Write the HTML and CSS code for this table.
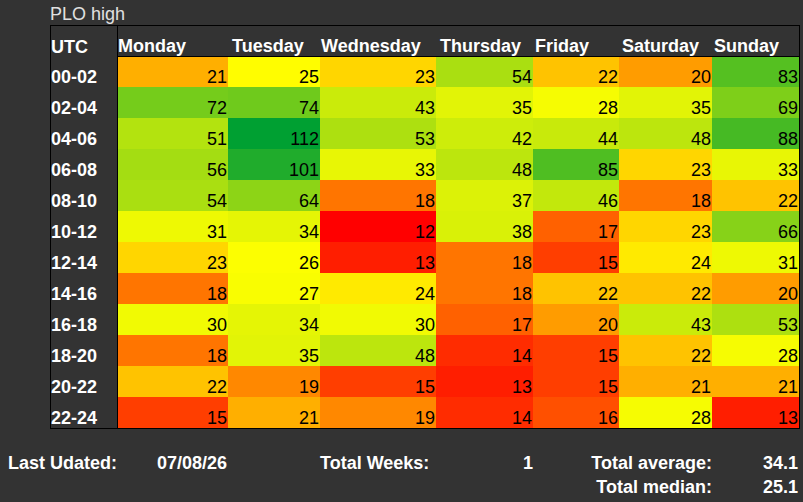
FILE: index.html
```html
<!DOCTYPE html>
<html lang="en">
<head>
<meta charset="utf-8">
<title>PLO high</title>
<link rel="stylesheet" href="styles.css">
</head>
<body>
<div class="page">
  <div class="title">PLO high</div>
  <div class="heatmap">
    <div class="utc corner">UTC</div>
    <div class="day d1">Monday</div>
    <div class="day d2">Tuesday</div>
    <div class="day d3">Wednesday</div>
    <div class="day d4">Thursday</div>
    <div class="day d5">Friday</div>
    <div class="day d6">Saturday</div>
    <div class="day d7">Sunday</div>

    <div class="utc">00-02</div>
    <div class="cell" style="background:rgb(255,175,0)">21</div>
    <div class="cell" style="background:rgb(255,253,0)">25</div>
    <div class="cell" style="background:rgb(255,214,0)">23</div>
    <div class="cell" style="background:rgb(170,223,17)">54</div>
    <div class="cell" style="background:rgb(255,195,0)">22</div>
    <div class="cell" style="background:rgb(255,156,0)">20</div>
    <div class="cell" style="background:rgb(85,192,33)">83</div>

    <div class="utc">02-04</div>
    <div class="cell" style="background:rgb(117,204,27)">72</div>
    <div class="cell" style="background:rgb(111,202,28)">74</div>
    <div class="cell" style="background:rgb(202,235,10)">43</div>
    <div class="cell" style="background:rgb(226,244,6)">35</div>
    <div class="cell" style="background:rgb(246,252,2)">28</div>
    <div class="cell" style="background:rgb(226,244,6)">35</div>
    <div class="cell" style="background:rgb(126,207,25)">69</div>

    <div class="utc">04-06</div>
    <div class="cell" style="background:rgb(179,227,15)">51</div>
    <div class="cell" style="background:rgb(0,160,50)">112</div>
    <div class="cell" style="background:rgb(173,224,16)">53</div>
    <div class="cell" style="background:rgb(205,237,10)">42</div>
    <div class="cell" style="background:rgb(200,234,11)">44</div>
    <div class="cell" style="background:rgb(188,230,13)">48</div>
    <div class="cell" style="background:rgb(70,186,36)">88</div>

    <div class="utc">06-08</div>
    <div class="cell" style="background:rgb(164,221,18)">56</div>
    <div class="cell" style="background:rgb(32,172,44)">101</div>
    <div class="cell" style="background:rgb(232,246,5)">33</div>
    <div class="cell" style="background:rgb(188,230,13)">48</div>
    <div class="cell" style="background:rgb(79,190,34)">85</div>
    <div class="cell" style="background:rgb(255,214,0)">23</div>
    <div class="cell" style="background:rgb(232,246,5)">33</div>

    <div class="utc">08-10</div>
    <div class="cell" style="background:rgb(170,223,17)">54</div>
    <div class="cell" style="background:rgb(141,212,22)">64</div>
    <div class="cell" style="background:rgb(255,117,0)">18</div>
    <div class="cell" style="background:rgb(220,242,7)">37</div>
    <div class="cell" style="background:rgb(194,232,12)">46</div>
    <div class="cell" style="background:rgb(255,117,0)">18</div>
    <div class="cell" style="background:rgb(255,195,0)">22</div>

    <div class="utc">10-12</div>
    <div class="cell" style="background:rgb(238,249,3)">31</div>
    <div class="cell" style="background:rgb(229,245,5)">34</div>
    <div class="cell" style="background:rgb(255,0,0)">12</div>
    <div class="cell" style="background:rgb(217,241,7)">38</div>
    <div class="cell" style="background:rgb(255,97,0)">17</div>
    <div class="cell" style="background:rgb(255,214,0)">23</div>
    <div class="cell" style="background:rgb(135,210,24)">66</div>

    <div class="utc">12-14</div>
    <div class="cell" style="background:rgb(255,214,0)">23</div>
    <div class="cell" style="background:rgb(252,254,1)">26</div>
    <div class="cell" style="background:rgb(255,30,0)">13</div>
    <div class="cell" style="background:rgb(255,117,0)">18</div>
    <div class="cell" style="background:rgb(255,62,0)">15</div>
    <div class="cell" style="background:rgb(255,234,0)">24</div>
    <div class="cell" style="background:rgb(238,249,3)">31</div>

    <div class="utc">14-16</div>
    <div class="cell" style="background:rgb(255,117,0)">18</div>
    <div class="cell" style="background:rgb(249,253,1)">27</div>
    <div class="cell" style="background:rgb(255,234,0)">24</div>
    <div class="cell" style="background:rgb(255,117,0)">18</div>
    <div class="cell" style="background:rgb(255,195,0)">22</div>
    <div class="cell" style="background:rgb(255,195,0)">22</div>
    <div class="cell" style="background:rgb(255,156,0)">20</div>

    <div class="utc">16-18</div>
    <div class="cell" style="background:rgb(241,250,3)">30</div>
    <div class="cell" style="background:rgb(229,245,5)">34</div>
    <div class="cell" style="background:rgb(241,250,3)">30</div>
    <div class="cell" style="background:rgb(255,97,0)">17</div>
    <div class="cell" style="background:rgb(255,156,0)">20</div>
    <div class="cell" style="background:rgb(202,235,10)">43</div>
    <div class="cell" style="background:rgb(173,224,16)">53</div>

    <div class="utc">18-20</div>
    <div class="cell" style="background:rgb(255,117,0)">18</div>
    <div class="cell" style="background:rgb(226,244,6)">35</div>
    <div class="cell" style="background:rgb(188,230,13)">48</div>
    <div class="cell" style="background:rgb(255,44,0)">14</div>
    <div class="cell" style="background:rgb(255,62,0)">15</div>
    <div class="cell" style="background:rgb(255,195,0)">22</div>
    <div class="cell" style="background:rgb(246,252,2)">28</div>

    <div class="utc">20-22</div>
    <div class="cell" style="background:rgb(255,195,0)">22</div>
    <div class="cell" style="background:rgb(255,136,0)">19</div>
    <div class="cell" style="background:rgb(255,62,0)">15</div>
    <div class="cell" style="background:rgb(255,30,0)">13</div>
    <div class="cell" style="background:rgb(255,62,0)">15</div>
    <div class="cell" style="background:rgb(255,175,0)">21</div>
    <div class="cell" style="background:rgb(255,175,0)">21</div>

    <div class="utc">22-24</div>
    <div class="cell" style="background:rgb(255,62,0)">15</div>
    <div class="cell" style="background:rgb(255,175,0)">21</div>
    <div class="cell" style="background:rgb(255,136,0)">19</div>
    <div class="cell" style="background:rgb(255,44,0)">14</div>
    <div class="cell" style="background:rgb(255,80,0)">16</div>
    <div class="cell" style="background:rgb(246,252,2)">28</div>
    <div class="cell" style="background:rgb(255,30,0)">13</div>
  </div>

  <div class="summary">
    <div class="label">Last Udated:</div>
    <div class="value">07/08/26</div>
    <div class="label">Total Weeks:</div>
    <div class="value right">1</div>
    <div class="label right">Total average:</div>
    <div class="value right">34.1</div>

    <div class="label right c5">Total median:</div>
    <div class="value right">25.1</div>
  </div>
</div>
</body>
</html>
```

FILE: styles.css
```css
html, body {
  margin: 0;
  padding: 0;
  background: #333333;
}

body {
  font-family: "Liberation Sans", Arial, sans-serif;
  font-size: 18px;
}

.page {
  padding-top: 4px;
}

.title {
  margin-left: 50px;
  line-height: 21px;
  color: #e0e0e0;
}

.heatmap {
  display: grid;
  grid-template-columns: 67px 110px 92px 116px 97px 86px 93px 87px;
  grid-template-rows: 31px 30px repeat(11, 31px);
  width: max-content;
  margin-left: 50px;
  border: 1px solid #000;
  line-height: 20px;
}

.utc {
  box-sizing: border-box;
  border-right: 1px solid #000;
  color: #fff;
  font-weight: bold;
  display: flex;
  align-items: flex-end;
  padding-left: 0;
}

.day {
  box-sizing: border-box;
  border-bottom: 1px solid #000;
  color: #fff;
  font-weight: bold;
  display: flex;
  align-items: flex-end;
}

.d1 { padding-left: 0; }
.d2 { padding-left: 4px; }
.d3 { padding-left: 1px; }
.d4 { padding-left: 4px; }
.d5 { padding-left: 2px; }
.d6 { padding-left: 3px; }
.d7 { padding-left: 2px; }

.cell {
  color: #000;
  display: flex;
  align-items: flex-end;
  justify-content: flex-end;
  padding-right: 1px;
}

.summary {
  display: grid;
  grid-template-columns: 149px 163px 113px 100px 179px 86px;
  grid-auto-rows: 24px;
  margin-top: 22px;
  padding-left: 8px;
  line-height: 24px;
  color: #fff;
  font-weight: bold;
}

.right {
  text-align: right;
}

.c5 {
  grid-column: 5;
}
```
